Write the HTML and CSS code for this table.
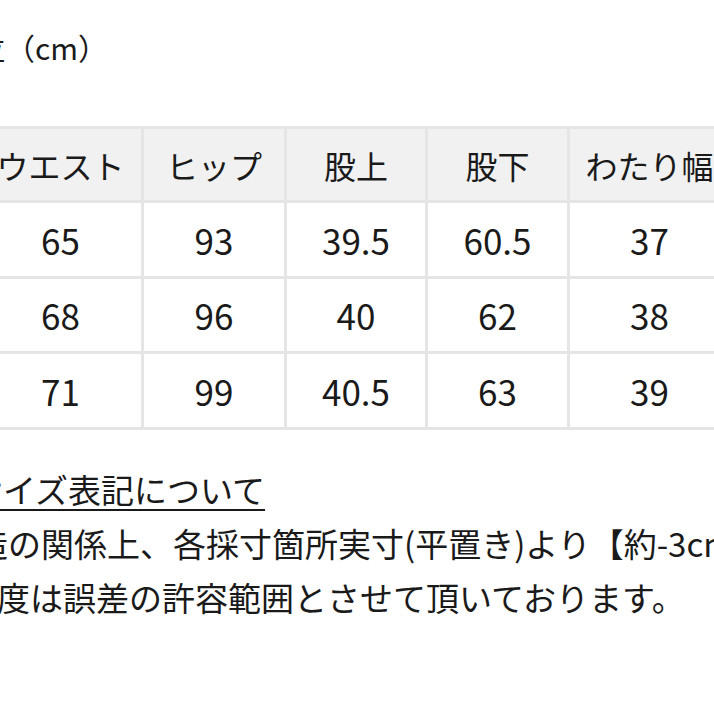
FILE: index.html
```html
<!DOCTYPE html>
<html lang="ja">
<head>
<meta charset="utf-8">
<title>サイズ表</title>
<link rel="stylesheet" href="styles.css">
</head>
<body>
<div class="page">
  <div class="title">単位（cm）</div>
  <table class="size-table">
    <colgroup>
      <col class="col-a"><col class="col-b"><col class="col-c"><col class="col-d"><col class="col-e">
    </colgroup>
    <thead>
      <tr><th>ウエスト</th><th>ヒップ</th><th>股上</th><th>股下</th><th>わたり幅</th></tr>
    </thead>
    <tbody>
      <tr><td>65</td><td>93</td><td>39.5</td><td>60.5</td><td>37</td></tr>
      <tr><td>68</td><td>96</td><td>40</td><td>62</td><td>38</td></tr>
      <tr><td>71</td><td>99</td><td>40.5</td><td>63</td><td>39</td></tr>
    </tbody>
  </table>
  <div class="notes">
    <div class="note-line note-line--head"><span class="note-link">サイズ表記について</span></div>
    <div class="note-line note-line--first">製造の関係上、各採寸箇所実寸(平置き)より【約-3cm～+3cm】</div>
    <div class="note-line note-line--second">程度は誤差の許容範囲とさせて頂いております。</div>
  </div>
</div>
</body>
</html>
```

FILE: styles.css
```css
html, body {
  margin: 0;
  padding: 0;
  overflow: hidden;
  background: #ffffff;
}

.page {
  width: 714px;
  height: 714px;
  overflow: hidden;
  color: #1a1a1a;
  font-family: "Noto Sans CJK JP", "Noto Sans", sans-serif;
}

.title {
  margin: 27px 0 0 -55px;
  font-size: 30px;
  line-height: 40px;
  white-space: nowrap;
}

.size-table {
  margin: 59px 0 0 -20px;
  border-collapse: separate;
  border-spacing: 0;
  table-layout: fixed;
  width: 752px;
  font-size: 32px;
}

.col-a { width: 164px; }
.col-b { width: 143px; }
.col-c { width: 141px; }
.col-d { width: 142px; }
.col-e { width: 162px; }

.size-table th,
.size-table td {
  padding: 0;
  text-align: center;
  vertical-align: middle;
  font-weight: 400;
  border-right: 3px solid #e5e5e5;
  border-bottom: 3px solid #e5e5e5;
  white-space: nowrap;
  overflow: hidden;
}

.size-table th {
  height: 71px;
  background: #f1f1f1;
  border-top: 3px solid #e5e5e5;
}

.size-table td {
  height: 72.5px;
  font-size: 35px;
  background: #ffffff;
}

.notes {
  margin-top: 32px;
  font-size: 33px;
  line-height: 54px;
  white-space: nowrap;
}

.note-line--head { margin-left: -30px; }
.note-line--first { margin-left: -58px; }
.note-line--second { margin-left: -36px; }

.note-link {
  text-decoration: underline;
  text-decoration-thickness: 2px;
  text-underline-offset: 6px;
}
```
